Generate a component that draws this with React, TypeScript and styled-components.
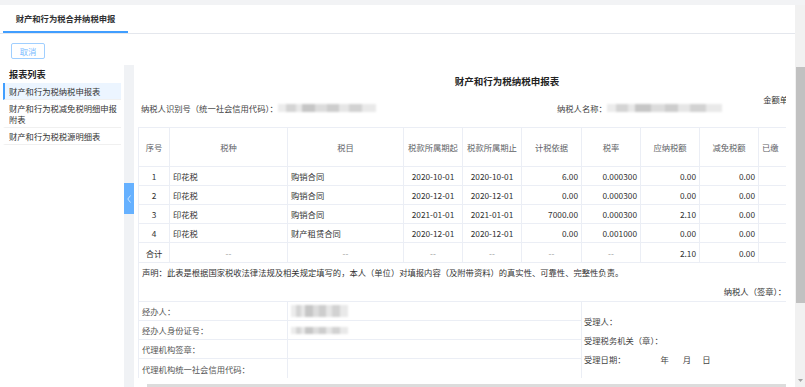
import React from "react";
import styled, { createGlobalStyle } from "styled-components";

const Global = createGlobalStyle`
  html, body { margin: 0; padding: 0; background: #fff; }
  body {
    font-family: "Noto Sans CJK SC", "Noto Sans", sans-serif;
    font-size: 8.3px;
    color: #333;
  }
  * { box-sizing: border-box; }
`;

const Page = styled.div`
  width: 805px;
  height: 387px;
  overflow: hidden;
  display: flex;
  flex-direction: column;
`;

const TopStrip = styled.div`
  height: 5px;
  flex-shrink: 0;
  background: #f2f3f5;
`;

const Frame = styled.div`
  flex: 1;
  display: flex;
  min-height: 0;
`;

const MainCol = styled.div`
  flex: 1;
  min-width: 0;
  display: flex;
  flex-direction: column;
`;

const TabBar = styled.div`
  height: 29px;
  flex-shrink: 0;
  display: flex;
  padding-left: 3px;
  border-bottom: 1px solid #e4e7ed;
`;

const Tab = styled.div<{ $active?: boolean }>`
  width: 125px;
  display: flex;
  align-items: center;
  justify-content: center;
  font-weight: bold;
  color: #303133;
  border-bottom: 2px solid ${(p) => (p.$active ? "#409eff" : "transparent")};
`;

const Toolbar = styled.div`
  height: 31px;
  flex-shrink: 0;
  padding: 9px 0 0 11px;
`;

const CancelButton = styled.button`
  width: 34px;
  height: 16px;
  padding: 0;
  border: 1px solid #a0cfff;
  border-radius: 2px;
  background: #fff;
  color: #79bbff;
  font-family: inherit;
  font-size: 8.3px;
  line-height: 14px;
`;

const Workspace = styled.div`
  flex: 1;
  min-height: 0;
  display: flex;
`;

const Sidebar = styled.div`
  width: 124px;
  flex-shrink: 0;
  padding-left: 3px;
`;

const SideTitle = styled.div`
  font-size: 9.2px;
  font-weight: bold;
  line-height: 18px;
  padding-left: 6px;
  color: #1f1f1f;
`;

const SideItem = styled.div<{ $active?: boolean }>`
  width: 118px;
  padding: 3px 2px 2px 4px;
  line-height: 11px;
  color: #333;
  border-left: 2px solid ${(p) => (p.$active ? "#409eff" : "transparent")};
  background: ${(p) => (p.$active ? "#ecf5ff" : "transparent")};
  border-bottom: 1px solid #f0f0f0;
`;

const Gutter = styled.div`
  width: 10px;
  flex-shrink: 0;
  background: #f0f2f5;
  padding-top: 118px;
`;

const Collapse = styled.div`
  height: 31px;
  background: #66b1ff;
  display: flex;
  align-items: center;
  justify-content: center;
`;

const Panel = styled.div`
  flex: 1;
  min-width: 0;
  padding: 0 9px 0 4px;
  display: flex;
  flex-direction: column;
`;

const Clip = styled.div`
  overflow: hidden;
`;

const Sheet = styled.div`
  width: 738px;
`;

const Title = styled.div`
  padding-top: 9px;
  font-size: 9.5px;
  font-weight: bold;
  line-height: 14px;
  text-align: center;
  color: #222;
`;

const UnitRow = styled.div`
  margin-top: 7px;
  height: 8px;
  line-height: 8px;
  text-align: right;
  padding-right: 63px;
  color: #333;
`;

const InfoRow = styled.div`
  display: flex;
  align-items: center;
  height: 10px;
  line-height: 10px;
  margin-bottom: 14px;
  padding-left: 3px;
  color: #444;
`;

const InfoPart = styled.div<{ $w?: number }>`
  display: flex;
  align-items: center;
  width: ${(p) => (p.$w ? `${p.$w}px` : "auto")};
  flex-shrink: 0;
`;

const Blur = styled.span<{ $w: number; $h: number }>`
  display: inline-block;
  vertical-align: middle;
  width: ${(p) => p.$w}px;
  height: ${(p) => p.$h}px;
  background: linear-gradient(
    90deg,
    #ececec 0%,
    #ececec 8%,
    #d4d4d4 8%,
    #d4d4d4 18%,
    #e8e8e8 18%,
    #e8e8e8 24%,
    #c6c6c6 24%,
    #c6c6c6 38%,
    #dcdcdc 38%,
    #dcdcdc 50%,
    #cdcdcd 50%,
    #cdcdcd 62%,
    #e6e6e6 62%,
    #e6e6e6 72%,
    #d2d2d2 72%,
    #d2d2d2 86%,
    #e9e9e9 86%,
    #e9e9e9 100%
  );
  filter: blur(1px);
`;

const Table = styled.table`
  border-collapse: collapse;
  table-layout: fixed;
  width: 738px;
`;

const Tr = styled.tr<{ $h: number }>`
  height: ${(p) => p.$h}px;
`;

const Th = styled.th<{ $align?: string }>`
  border: 1px solid #ebeef5;
  padding: 0 3px;
  font-weight: normal;
  line-height: 12px;
  color: #606266;
  white-space: nowrap;
  overflow: hidden;
  text-align: ${(p) => p.$align || "center"};
`;

const Td = styled.td<{ $align?: string; $muted?: boolean }>`
  border: 1px solid #ebeef5;
  padding: 0 3px;
  line-height: 12px;
  white-space: nowrap;
  overflow: hidden;
  color: ${(p) => (p.$muted ? "#9a9a9a" : "#333")};
  text-align: ${(p) => p.$align || "left"};
`;

const NoteCell = styled.td`
  border: 1px solid #ebeef5;
  padding: 3px 90px 0 3px;
  vertical-align: top;
  color: #333;
`;

const NoteLine = styled.div<{ $right?: boolean }>`
  line-height: 12px;
  text-align: ${(p) => (p.$right ? "right" : "left")};
  margin-top: ${(p) => (p.$right ? "7px" : "0")};
  white-space: nowrap;
`;

const LabelCell = styled.td`
  border: 1px solid #ebeef5;
  padding: 0 3px;
  line-height: 12px;
  color: #555;
  white-space: nowrap;
`;

const ValueCell = styled.td`
  border: 1px solid #ebeef5;
  padding: 0 3px;
  line-height: 0;
`;

const ReceiveCell = styled.td`
  border: 1px solid #ebeef5;
  padding: 0 2px;
  vertical-align: middle;
  color: #444;
`;

const ReceiveLine = styled.div`
  line-height: 19px;
  white-space: nowrap;
`;

const Gap = styled.span<{ $w: number }>`
  margin-left: ${(p) => p.$w}px;
`;

const HTrack = styled.div`
  margin-top: 6px;
  padding-left: 9px;
`;

const HThumb = styled.div`
  height: 3px;
  background: #dcdcdc;
`;

const VScroll = styled.div`
  width: 10px;
  flex-shrink: 0;
  background: #f1f1f1;
  display: flex;
  flex-direction: column;
  align-items: stretch;
`;

const VThumb = styled.div`
  margin: 62px 0 0 1px;
  height: 236px;
  background: #c1c1c1;
`;

const VSpacer = styled.div`
  flex: 1;
`;

const VArrow = styled.div`
  height: 12px;
  display: flex;
  align-items: center;
  justify-content: center;
`;

const widths = [31, 118, 116, 59, 59, 60, 59, 59, 59, 59, 59];

const rows = [
  ["1", "印花税", "购销合同", "2020-10-01", "2020-10-01", "6.00", "0.000300", "0.00", "0.00", "", ""],
  ["2", "印花税", "购销合同", "2020-12-01", "2020-12-01", "0.00", "0.000300", "0.00", "0.00", "", ""],
  ["3", "印花税", "购销合同", "2021-01-01", "2021-01-01", "7000.00", "0.000300", "2.10", "0.00", "", ""],
  ["4", "印花税", "财产租赁合同", "2020-12-01", "2020-12-01", "0.00", "0.001000", "0.00", "0.00", "", ""],
];

const aligns = ["center", "left", "left", "center", "center", "right", "right", "right", "right", "right", "right"];

export default function App() {
  return (
    <Page>
      <Global />
      <TopStrip />
      <Frame>
        <MainCol>
          <TabBar>
            <Tab $active>财产和行为税合并纳税申报</Tab>
          </TabBar>
          <Toolbar>
            <CancelButton>取消</CancelButton>
          </Toolbar>
          <Workspace>
            <Sidebar>
              <SideTitle>报表列表</SideTitle>
              <SideItem $active>财产和行为税纳税申报表</SideItem>
              <SideItem>财产和行为税减免税明细申报附表</SideItem>
              <SideItem>财产和行为税税源明细表</SideItem>
            </Sidebar>
            <Gutter>
              <Collapse>
                <svg width="6" height="10" viewBox="0 0 6 10">
                  <path d="M4.5 1.5 L1.8 5 L4.5 8.5" fill="none" stroke="#d6eaff" strokeWidth="0.9" />
                </svg>
              </Collapse>
            </Gutter>
            <Panel>
              <Clip>
                <Sheet>
                  <Title>财产和行为税纳税申报表</Title>
                  <UnitRow>金额单位：元</UnitRow>
                  <InfoRow>
                    <InfoPart $w={416}>
                      纳税人识别号（统一社会信用代码）：
                      <Blur $w={98} $h={8} />
                    </InfoPart>
                    <InfoPart>
                      纳税人名称：
                      <Blur $w={115} $h={8} />
                    </InfoPart>
                  </InfoRow>
                  <Table>
                    <colgroup>
                      {widths.map((w, i) => (
                        <col key={i} style={{ width: w }} />
                      ))}
                    </colgroup>
                    <tbody>
                      <Tr $h={39}>
                        <Th>序号</Th>
                        <Th>税种</Th>
                        <Th>税目</Th>
                        <Th>税款所属期起</Th>
                        <Th>税款所属期止</Th>
                        <Th>计税依据</Th>
                        <Th>税率</Th>
                        <Th>应纳税额</Th>
                        <Th>减免税额</Th>
                        <Th $align="left">已缴</Th>
                        <Th />
                      </Tr>
                      {rows.map((r) => (
                        <Tr $h={19} key={r[0]}>
                          {r.map((c, i) => (
                            <Td key={i} $align={aligns[i]}>
                              {c}
                            </Td>
                          ))}
                        </Tr>
                      ))}
                      <Tr $h={20}>
                        <Td $align="center">合计</Td>
                        {[1, 2, 3, 4, 5, 6].map((i) => (
                          <Td key={i} $align="center" $muted>
                            --
                          </Td>
                        ))}
                        <Td $align="right">2.10</Td>
                        <Td $align="right">0.00</Td>
                        <Td />
                        <Td />
                      </Tr>
                      <Tr $h={39}>
                        <NoteCell colSpan={11}>
                          <NoteLine>
                            声明：此表是根据国家税收法律法规及相关规定填写的，本人（单位）对填报内容（及附带资料）的真实性、可靠性、完整性负责。
                          </NoteLine>
                          <NoteLine $right>纳税人（签章）：</NoteLine>
                        </NoteCell>
                      </Tr>
                      <Tr $h={19}>
                        <LabelCell colSpan={2}>经办人：</LabelCell>
                        <ValueCell colSpan={4}>
                          <Blur $w={57} $h={12} />
                        </ValueCell>
                        <ReceiveCell colSpan={5} rowSpan={4}>
                          <ReceiveLine>受理人：</ReceiveLine>
                          <ReceiveLine>受理税务机关（章）：</ReceiveLine>
                          <ReceiveLine>
                            受理日期：<Gap $w={35}>年</Gap>
                            <Gap $w={14}>月</Gap>
                            <Gap $w={11}>日</Gap>
                          </ReceiveLine>
                        </ReceiveCell>
                      </Tr>
                      <Tr $h={19}>
                        <LabelCell colSpan={2}>经办人身份证号：</LabelCell>
                        <ValueCell colSpan={4}>
                          <Blur $w={57} $h={7} />
                        </ValueCell>
                      </Tr>
                      <Tr $h={19}>
                        <LabelCell colSpan={2}>代理机构签章：</LabelCell>
                        <ValueCell colSpan={4} />
                      </Tr>
                      <Tr $h={20}>
                        <LabelCell colSpan={2}>代理机构统一社会信用代码：</LabelCell>
                        <ValueCell colSpan={4} />
                      </Tr>
                    </tbody>
                  </Table>
                </Sheet>
              </Clip>
              <HTrack>
                <HThumb />
              </HTrack>
            </Panel>
          </Workspace>
        </MainCol>
        <VScroll>
          <VThumb />
          <VSpacer />
          <VArrow>
            <svg width="5" height="4" viewBox="0 0 5 4">
              <path d="M0 0 L5 0 L2.5 3 Z" fill="#a3a3a3" />
            </svg>
          </VArrow>
        </VScroll>
      </Frame>
    </Page>
  );
}
